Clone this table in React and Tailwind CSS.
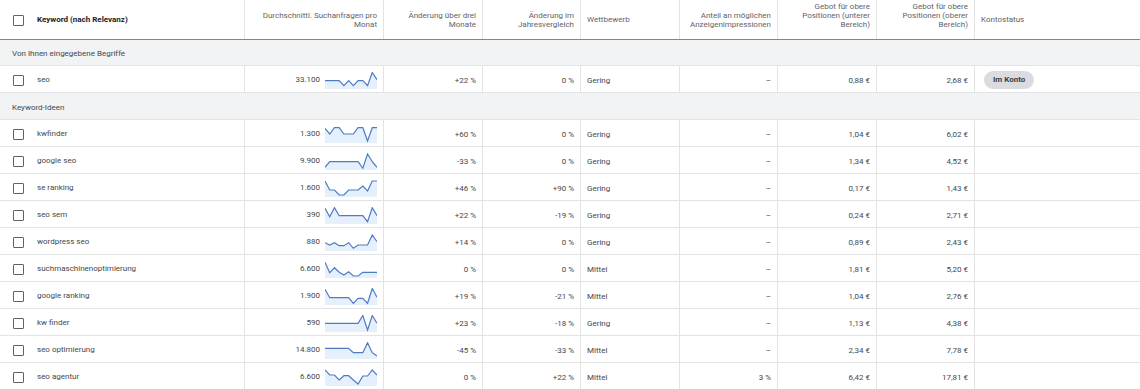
import React from "react";

const GRID = "grid grid-cols-[245px_139px_99px_98px_99px_98px_99px_98px_1fr]";

const seoRow = {
  k: "seo", v: "33.100", s: [8.7, 8.7, 8.7, 8.7, 13.7, 8.7, 13.7, 8.7, 8.7, 13.7, 0.5, 7.7],
  c3: "+22 %", c12: "0 %", w: "Gering", a: "–", lo: "0,88 €", hi: "2,68 €", status: true,
};

const rows = [
  { k: "kwfinder", v: "1.300", s: [2.3, 8, 1.7, 1.7, 8, 8, 8, 1.7, 1.7, 15, 1.7, 1.7], c3: "+60 %", c12: "0 %", w: "Gering", a: "–", lo: "1,04 €", hi: "6,02 €" },
  { k: "google seo", v: "9.900", s: [14.3, 8.7, 8.7, 8.7, 8.7, 8.7, 8.7, 8.7, 15.3, 1, 8.7, 14.3], c3: "-33 %", c12: "0 %", w: "Gering", a: "–", lo: "1,34 €", hi: "4,52 €" },
  { k: "se ranking", v: "1.600", s: [1, 10, 10, 15, 15, 10, 10, 10, 6, 11, 1, 1], c3: "+46 %", c12: "+90 %", w: "Gering", a: "–", lo: "0,17 €", hi: "1,43 €" },
  { k: "seo sem", v: "390", s: [1.3, 9.7, 0.7, 8.7, 8.7, 8.7, 8.7, 8.7, 8.7, 14.7, 0.7, 8.7], c3: "+22 %", c12: "-19 %", w: "Gering", a: "–", lo: "0,24 €", hi: "2,71 €" },
  { k: "wordpress seo", v: "880", s: [8.7, 11, 8.7, 11.7, 11.7, 8.7, 14.3, 11, 11, 11, 1, 7.7], c3: "+14 %", c12: "0 %", w: "Gering", a: "–", lo: "0,89 €", hi: "2,43 €" },
  { k: "suchmaschinenoptimierung", v: "6.600", s: [1.3, 11.7, 6.7, 11.3, 14, 10.7, 15, 15, 11.3, 11.3, 11.3, 11.3], c3: "0 %", c12: "0 %", w: "Mittel", a: "–", lo: "1,81 €", hi: "5,20 €" },
  { k: "google ranking", v: "1.900", s: [1.3, 9.7, 9.7, 9.7, 9.7, 9.7, 15.3, 10.3, 10.3, 15.3, 0.5, 9.3], c3: "+19 %", c12: "-21 %", w: "Mittel", a: "–", lo: "1,04 €", hi: "2,76 €" },
  { k: "kw finder", v: "590", s: [8.3, 8.3, 8.3, 8.3, 8.3, 8.3, 8.3, 8.3, 0.5, 15, 0.5, 8.3], c3: "+23 %", c12: "-18 %", w: "Gering", a: "–", lo: "1,13 €", hi: "4,38 €" },
  { k: "seo optimierung", v: "14.800", s: [6.3, 6.3, 6.3, 6.3, 6.3, 6.3, 10.7, 10.7, 10.7, 0.7, 10.7, 14], c3: "-45 %", c12: "-33 %", w: "Mittel", a: "–", lo: "2,34 €", hi: "7,78 €" },
  { k: "seo agentur", v: "6.600", s: [1, 6, 6, 11, 6.7, 6.7, 11, 15, 7, 7, 1, 6], c3: "0 %", c12: "+22 %", w: "Mittel", a: "3 %", lo: "6,42 €", hi: "17,81 €" },
];

function Spark({ pts }) {
  const W = 52;
  const H = 17;
  const coords = pts.map((y, i) => [((i * W) / 11).toFixed(2), y]);
  const line = coords.map(([x, y]) => `${x},${y}`).join(" ");
  const area = `0,${H} ${line} ${W},${H}`;
  return (
    <svg width={W} height={H} viewBox={`0 0 ${W} ${H}`} className="block shrink-0">
      <polygon points={area} fill="#e6effc" />
      <polyline points={line} fill="none" stroke="#4d7cc4" strokeWidth="1.2" strokeLinejoin="miter" />
    </svg>
  );
}

function Checkbox() {
  return <div className="w-[11px] h-[11px] border-[1.5px] border-[#5f6368] rounded-[1px] shrink-0" />;
}

const cellR = "flex items-center justify-end px-[6px] border-r border-[#e3e3e3]";
const cellL = "flex items-center px-[6px] border-r border-[#e3e3e3]";

function Row({ r }) {
  return (
    <div className={`${GRID} h-[27px] border-b border-[#e3e3e3] bg-white text-[8px] text-[#45484c]`}>
      <div className="flex items-center pl-[13px] pt-[2px] border-r border-[#e3e3e3]">
        <Checkbox />
        <span className="ml-[13px]">{r.k}</span>
      </div>
      <div className={`${cellR} pt-[2px]`}>
        <span className="mr-[5px]">{r.v}</span>
        <Spark pts={r.s} />
      </div>
      <div className={`${cellR} pt-[3px]`}>{r.c3}</div>
      <div className={`${cellR} pt-[3px]`}>{r.c12}</div>
      <div className={`${cellL} pt-[3px]`}>{r.w}</div>
      <div className={`${cellR} pt-[3px]`}>{r.a}</div>
      <div className={`${cellR} pt-[3px]`}>{r.lo}</div>
      <div className={`${cellR} pt-[3px]`}>{r.hi}</div>
      <div className="flex items-center pl-[9px] pt-[2px]">
        {r.status && (
          <span className="inline-flex items-center h-[18px] px-[9px] rounded-full bg-[#dadce0] font-bold text-[#3c4043]">
            Im Konto
          </span>
        )}
      </div>
    </div>
  );
}

const hR = "flex items-end justify-end text-right px-[6px] pb-[10px] leading-[9px] border-r border-[#e3e3e3]";
const hL = "flex items-center px-[6px] pt-[1px] border-r border-[#e3e3e3]";

export default function App() {
  return (
    <div className="w-[1140px] h-[389px] overflow-hidden bg-white font-['Roboto',sans-serif]">
      <div className={`${GRID} h-[40px] border-b border-[#80868b] text-[8px] text-[#5f6368]`}>
        <div className="flex items-center pl-[13px] pt-[1px] border-r border-[#e3e3e3]">
          <Checkbox />
          <span className="ml-[13px] font-bold text-[#202124]">Keyword (nach Relevanz)</span>
        </div>
        <div className={hR}>
          <span>
            Durchschnittl. Suchanfragen pro
            <br />
            Monat
          </span>
        </div>
        <div className={hR}>
          <span>
            Änderung über drei
            <br />
            Monate
          </span>
        </div>
        <div className={hR}>
          <span>
            Änderung im
            <br />
            Jahresvergleich
          </span>
        </div>
        <div className={hL}>Wettbewerb</div>
        <div className={hR}>
          <span>
            Anteil an möglichen
            <br />
            Anzeigenimpressionen
          </span>
        </div>
        <div className={hR}>
          <span>
            Gebot für obere
            <br />
            Positionen (unterer
            <br />
            Bereich)
          </span>
        </div>
        <div className={hR}>
          <span>
            Gebot für obere
            <br />
            Positionen (oberer
            <br />
            Bereich)
          </span>
        </div>
        <div className="flex items-center px-[6px] pt-[1px]">Kontostatus</div>
      </div>

      <div className="h-[26px] flex items-center pl-[12px] pt-[3px] bg-[#f1f3f4] border-b border-[#e3e3e3] text-[8px] text-[#45484c]">
        Von Ihnen eingegebene Begriffe
      </div>
      <Row r={seoRow} />
      <div className="h-[27px] flex items-center pl-[12px] pt-[3px] bg-[#f1f3f4] border-b border-[#e3e3e3] text-[8px] text-[#45484c]">
        Keyword-Ideen
      </div>
      {rows.map((r) => (
        <Row key={r.k} r={r} />
      ))}
    </div>
  );
}
